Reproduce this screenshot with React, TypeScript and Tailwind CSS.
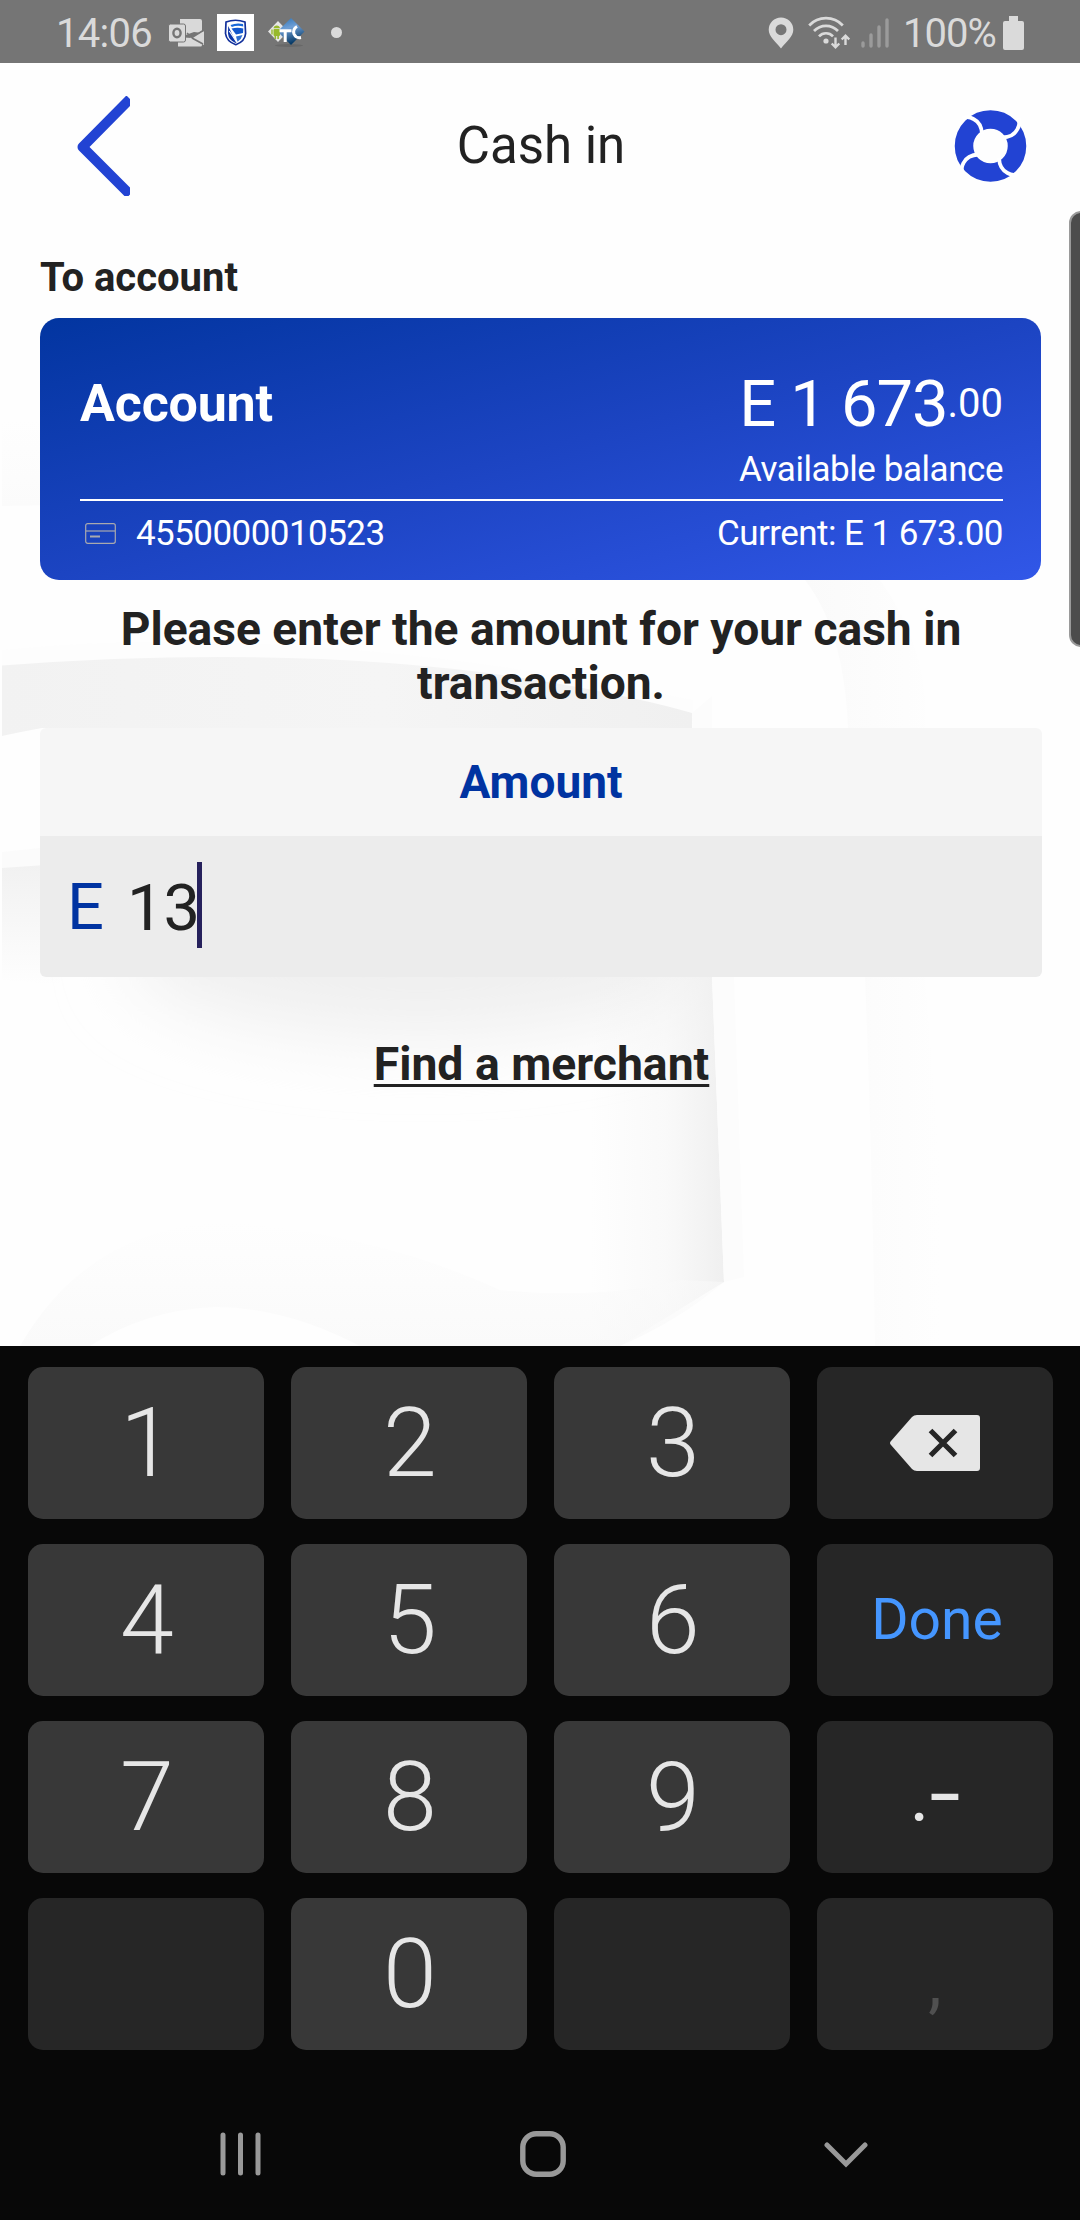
import React from "react";

function OutlookIcon() {
  return (
    <svg className="block h-[30px] w-[37px]" viewBox="0 0 37 30">
      <path d="M12 1h20q2 0 2 2v12l-8-1-14 5z" fill="#d9d9d9" />
      <path d="M10 19l13 1 11 6v1q0 1.500-1.500 1.500H10z" fill="#d9d9d9" />
      <path d="M36 13v14L22 20z" fill="#d9d9d9" />
      <path d="M19 15l5 4.500L36 12M24 20l11 6" stroke="#757575" strokeWidth="1.600" fill="none" />
      <rect x="0.500" y="6" width="17" height="18" rx="2" fill="#d9d9d9" stroke="#757575" strokeWidth="1" />
      <ellipse cx="9" cy="15" rx="3.600" ry="4.200" fill="none" stroke="#757575" strokeWidth="2.400" />
    </svg>
  );
}

function ShieldIcon() {
  return (
    <svg className="block h-[37px] w-[37px] bg-white" viewBox="0 0 37 37">
      <path d="M9 8q9.500-3.500 19 0l.6 11.500q-.6 8-9.800 11.200Q9.500 27.500 8.500 19.500z" fill="#fff" stroke="#12309b" strokeWidth="1.700" />
      <path d="M13.500 11q6-2.500 12.500-1l.3 2.500q-6-1.500-11.500.5z" fill="#1768d8" />
      <path d="M14.500 14.500q6-1.500 11.800 0l-.3 4.500-7 1.500z" fill="#1257cc" />
      <path d="M11.200 12l4.300 9 4 7.500-1 .5Q11.500 26 11 19.500z" fill="#0c35a8" />
      <path d="M25.500 21q-1.200 4.500-5 6.800L19 22.500z" fill="#2f6fd0" />
      <path d="M12.300 17l7.200 11" stroke="#fff" strokeWidth="1.100" fill="none" />
    </svg>
  );
}

function ConnectorIcon() {
  return (
    <svg className="block h-[32px] w-[38px]" viewBox="0 0 38 32">
      <defs>
        <linearGradient id="tc" x1="0" y1="0" x2="0.300" y2="1">
          <stop offset="0" stopColor="#2a6fb0" />
          <stop offset="0.450" stopColor="#6f9fd6" />
          <stop offset="1" stopColor="#073a66" />
        </linearGradient>
      </defs>
      <ellipse cx="22" cy="28.500" rx="14" ry="1.500" fill="#686868" />
      <path d="M11 4l10 10.500L11 25 1 14.500z" fill="#e6e6e6" />
      <path d="M24 1l13.500 13.500L24 28 10.500 14.500z" fill="url(#tc)" />
      <rect x="6.500" y="12" width="6.500" height="7" rx="1" fill="#97b92c" />
      <path d="M6.500 11.200a3.300 3.200 0 0 1 6.500 0zM4.300 12.500h1.400v5H4.300zM7.500 19h1.600v3H7.500zM10.300 19h1.600v3h-1.600z" fill="#97b92c" />
      <path d="M12.500 13.800h12M18.200 13v12M30 9.500q-4.500 2.500-3 7.500 2 4.500 7 3.500" stroke="#fff" strokeWidth="3" fill="none" />
    </svg>
  );
}

function PinIcon() {
  return (
    <svg className="block h-[32px] w-[26px]" viewBox="0 0 26 32">
      <path fillRule="evenodd" d="M13 .5a12.300 12.300 0 0 1 12.300 12.300C25.300 20 18 25 13 31.500 8 25 .7 20 .7 12.800A12.300 12.300 0 0 1 13 .5zm0 6.700a5.500 5.500 0 1 0 0 11 5.500 5.500 0 0 0 0-11z" fill="#dadada" />
    </svg>
  );
}

function WifiIcon() {
  return (
    <svg className="block h-[33px] w-[42px]" viewBox="0 0 42 33" fill="none" stroke="#dadada">
      <path d="M1.200 9.500a23 23 0 0 1 33.600 0M6 15a16.500 16.500 0 0 1 24 0M11 20.300a9.600 9.600 0 0 1 14 0" strokeWidth="2.700" />
      <circle cx="18" cy="25" r="2.600" fill="#dadada" stroke="none" />
      <path d="M27.500 21.500v9M23.700 27.500l3.800 3.800 3.800-3.800M37.500 29v-9M33.700 23.500l3.800-3.800 3.800 3.800" strokeWidth="2.400" />
    </svg>
  );
}

function SignalIcon() {
  return (
    <svg className="block h-[31px] w-[28px]" viewBox="0 0 28 31" stroke="#9b9b9b" strokeWidth="3.400" strokeLinecap="round">
      <path d="M2 29v-3M10 29V18M18 29V10M26 29V3" />
    </svg>
  );
}

function StatusBar() {
  return (
    <div className="flex h-[65px] shrink-0 items-center bg-[#757575] pl-[56px] pr-[56px] text-[40px] leading-none text-[#dadada]">
      <span className="w-[112px] pt-[2px] tracking-[-0.7px]">14:06</span>
      <OutlookIcon />
      <span className="ml-[12px]"><ShieldIcon /></span>
      <span className="ml-[13px]"><ConnectorIcon /></span>
      <span className="ml-[26px] size-[10.500px] rounded-full bg-[#dadada]" />
      <div className="ml-auto flex items-center">
        <PinIcon />
        <span className="ml-[14px]"><WifiIcon /></span>
        <span className="ml-[11px]"><SignalIcon /></span>
        <span className="ml-[14px] w-[96px] whitespace-nowrap pt-[2px] tracking-[-1px]">100%</span>
        <svg className="ml-[4px] block h-[34px] w-[21px]" viewBox="0 0 21 34">
          <path d="M6 0h9v5h4q2 0 2 2v25q0 2-2 2H2q-2 0-2-2V7q0-2 2-2h4z" fill="#dadada" />
        </svg>
      </div>
    </div>
  );
}

function Backdrop() {
  return (
    <svg className="absolute inset-x-0 bottom-0 h-[946px] w-[1080px]" viewBox="0 400 1080 946">
      <defs>
        <linearGradient id="band" x1="0" x2="1" y1="0" y2="0">
          <stop offset="0" stopColor="#f2f2f2" />
          <stop offset="0.550" stopColor="#f5f5f5" />
          <stop offset="1" stopColor="#f0f0f0" />
        </linearGradient>
        <linearGradient id="edge" x1="0" x2="1" y1="0" y2="0">
          <stop offset="0" stopColor="#f0f0f0" stopOpacity="0" />
          <stop offset="0.550" stopColor="#f1f1f1" stopOpacity="0.350" />
          <stop offset="1" stopColor="#efefef" />
        </linearGradient>
        <linearGradient id="stripe" x1="0" x2="1" y1="0" y2="0">
          <stop offset="0" stopColor="#fafafa" />
          <stop offset="0.900" stopColor="#fefefe" />
        </linearGradient>
        <linearGradient id="left" x1="0" x2="0" y1="0" y2="1">
          <stop offset="0" stopColor="#f1f1f1" />
          <stop offset="1" stopColor="#fefefe" />
        </linearGradient>
        <linearGradient id="top" x1="0" x2="0" y1="0" y2="1">
          <stop offset="0" stopColor="#fefefe" />
          <stop offset="1" stopColor="#fbfbfb" />
        </linearGradient>
        <linearGradient id="hill" x1="0" x2="0" y1="0" y2="1">
          <stop offset="0" stopColor="#fefefe" />
          <stop offset="1" stopColor="#f6f6f6" />
        </linearGradient>
        <filter id="soft" x="-30%" y="-80%" width="160%" height="260%">
          <feGaussianBlur stdDeviation="36" />
        </filter>
        <clipPath id="below">
          <path d="M2 868H708L712 977 724 1282 620 1346H2z" />
        </clipPath>
      </defs>
      <path d="M2 420H60V505L2 506z" fill="url(#top)" />
      <path d="M2 650Q300 620 693 700V728H2z" fill="#fdfdfd" />
      <path d="M2 665.500Q320 642 560 684 640 698 692 713V728H42Q20 732 2 736z" fill="url(#band)" />
      <path d="M692 713l20-17v32h-19z" fill="#fcfcfc" />
      <path d="M805 580H880Q930 650 925 728V977L955 1346H875Q872 1150 865 977L848 728Q844 630 805 580z" fill="url(#stripe)" />
      <path d="M2 852l38-4v22H2z" fill="#fbfbfb" />
      <path d="M2 868l58-4V985L2 980z" fill="url(#left)" />
      <g clipPath="url(#below)">
        <ellipse cx="420" cy="950" rx="290" ry="86" fill="#efefef" filter="url(#soft)" />
        <path d="M590 960H726V1346H590z" fill="url(#edge)" />
      </g>
      <path d="M712 977l22 0 10 300-20 5z" fill="#fcfcfc" />
      <path d="M20 1346Q90 1225 230 1222 380 1235 500 1290 600 1300 680 1280L724 1282Q680 1320 620 1346H360Q285 1307 215 1307 145 1310 90 1346z" fill="url(#hill)" opacity="0.500" />
    </svg>
  );
}

function Header() {
  return (
    <div className="flex h-[166px] items-center justify-between pl-[76px] pr-[53px]">
      <svg className="block h-[100px] w-[54px]" viewBox="0 0 54 100">
        <path d="M54 3L6.500 51 54 98.500" fill="none" stroke="#2243d3" strokeWidth="10" strokeLinejoin="round" />
      </svg>
      <h1 className="-ml-[1px] mb-[2px] text-[51px] leading-none text-[#222]">Cash in</h1>
      <svg className="mb-[1px] block h-[74px] w-[74px]" viewBox="-37.500 -37 74 74">
        <circle r="26.500" fill="none" stroke="#2243d3" strokeWidth="18.500" />
        {[0, 90, 180, 270].map((a) => (
          <path key={a} transform={`rotate(${a})`} d="M-28-28Q-22-30-17-27Q-9-23-8.500-12" fill="none" stroke="#fff" strokeWidth="3.800" />
        ))}
      </svg>
    </div>
  );
}

function AccountCard() {
  return (
    <section className="mx-[40px] mt-[16px] flex h-[262px] w-[1001px] flex-col rounded-[19px] bg-[linear-gradient(to_bottom_right,#0235a0_0%,#1c44c2_50%,#3157e8_100%)] pl-[40px] pr-[38px] pt-[50px] text-white">
      <div className="flex h-[72px] items-center justify-between">
        <span className="text-[52px] font-bold leading-none tracking-[-0.2px]">Account</span>
        <div className="flex items-center leading-none">
          <span className="text-[65px] tracking-[-1px]">E 1 673</span>
          <span className="text-[40px]">.00</span>
        </div>
      </div>
      <p className="mt-[9px] text-right text-[35px] leading-[42px] tracking-[-0.450px]">Available balance</p>
      <div className="mt-[8px] h-[2px] bg-white" />
      <div className="flex h-[64px] items-center text-[35px] leading-none tracking-[-0.550px]">
        <svg className="ml-[5px] block h-[21px] w-[31px]" viewBox="0 0 31 21" fill="none" stroke="#a9a9ae">
          <rect x="0.700" y="0.700" width="29.600" height="19.600" rx="2" strokeWidth="1.200" />
          <path d="M1 8h29" strokeWidth="1.200" />
          <path d="M5 13.500h10" strokeWidth="2" />
        </svg>
        <span className="ml-[20px]">4550000010523</span>
        <span className="ml-auto">Current: E 1 673.00</span>
      </div>
    </section>
  );
}

type KeyDef = { label?: string; kind: "digit" | "blank" | "erase" | "done" | "sign" | "comma" };

const keys: KeyDef[] = [
  { label: "1", kind: "digit" }, { label: "2", kind: "digit" }, { label: "3", kind: "digit" }, { kind: "erase" },
  { label: "4", kind: "digit" }, { label: "5", kind: "digit" }, { label: "6", kind: "digit" }, { kind: "done" },
  { label: "7", kind: "digit" }, { label: "8", kind: "digit" }, { label: "9", kind: "digit" }, { kind: "sign" },
  { kind: "blank" }, { label: "0", kind: "digit" }, { kind: "blank" }, { kind: "comma" },
];

function Key({ label, kind }: KeyDef) {
  const tone = kind === "digit" ? "bg-[#383838]" : "bg-[#262626]";
  return (
    <button className={`flex h-[152px] items-center justify-center rounded-[15px] leading-none text-[#e6e6e6] ${tone}`}>
      {kind === "digit" && <span className="ml-[2px] text-[97px] font-light">{label}</span>}
      {kind === "erase" && (
        <svg className="block h-[56px] w-[90px]" viewBox="0 0 90 56">
          <path d="M27 0H87q3 0 3 3v50q0 3-3 3H27q-3 0-5-2L1 30q-2-2 0-4L22 2q2-2 5-2z" fill="#e6e6e6" />
          <path d="M40.500 15.500l25 25m0-25l-25 25" stroke="#262626" strokeWidth="5.200" />
        </svg>
      )}
      {kind === "done" && <span className="mb-[2px] ml-[4px] text-[57px] text-[#4596ff]">Done</span>}
      {kind === "sign" && (
        <span className="flex items-baseline">
          <span className="-translate-y-[15px] text-[76px]">.</span>
          <span className="origin-[50%_65%] -translate-y-[8px] scale-y-75 text-[112px]">-</span>
        </span>
      )}
      {kind === "comma" && <span className="pt-[16px] text-[68px] text-[#505050]">,</span>}
    </button>
  );
}

function NavBar() {
  return (
    <div className="flex h-[90px] items-center justify-between pl-[220px] pr-[212px]">
      <svg className="block h-[44px] w-[41px]" viewBox="0 0 41 44" stroke="#999" strokeWidth="5" strokeLinecap="round">
        <path d="M3 3v38M20.500 3v38M38 3v38" />
      </svg>
      <svg className="ml-[1px] block h-[46px] w-[46px]" viewBox="0 0 46 46">
        <rect x="2.800" y="2.800" width="40.400" height="40.400" rx="13.500" fill="none" stroke="#999" strokeWidth="5.400" />
      </svg>
      <svg className="mt-[2px] block h-[28px] w-[44px]" viewBox="0 0 44 28">
        <path d="M3 4l19 19L41 4" fill="none" stroke="#999" strokeWidth="5" strokeLinecap="round" />
      </svg>
    </div>
  );
}

export default function App() {
  return (
    <div className="flex h-[2220px] w-[1080px] flex-col overflow-hidden bg-[#080808] font-['Roboto',sans-serif]">
      <StatusBar />
      <main className="relative h-[1283px] -mt-[2px] shrink-0 overflow-hidden bg-[#fefefe] text-[#222]">
        <Backdrop />
        <div className="relative">
          <Header />
          <h2 className="ml-[40px] pt-[25px] text-[40px] font-bold leading-[48px]">To account</h2>
          <AccountCard />
          <p className="ml-[91px] mt-[22px] w-[900px] text-center text-[46.150px] font-bold leading-[54px]">
            Please enter the amount for your cash in transaction.
          </p>
          <div className="mx-[40px] mt-[18px] w-[1002px] overflow-hidden rounded-[6px]">
            <div className="flex h-[108px] items-center justify-center bg-[#f6f6f6] text-[46px] font-bold leading-none text-[#0033a1]">Amount</div>
            <div className="flex h-[141px] items-center bg-[#ececec] pl-[27px] text-[65px] leading-none">
              <span className="w-[60px] pt-[2px] text-[#0033a1]">E</span>
              <span className="pt-[3px]">13</span>
              <span className="-ml-[3px] mb-[3px] h-[86px] w-[5px] bg-[#26215c]" />
            </div>
          </div>
          <div className="ml-[3px] mt-[60px] text-center text-[46.300px] font-bold leading-[54px]">
            <a className="underline decoration-[2.500px] underline-offset-[4px] [text-decoration-skip-ink:none]">Find a merchant</a>
          </div>
        </div>
        <div className="absolute -right-[4px] top-[148px] h-[436px] w-[15px] rounded-l-[12px] border-2 border-[#9a9a9a] bg-[#4c4c4c]" />
      </main>
      <div className="mt-[21px] grid grid-cols-4 gap-x-[27px] gap-y-[25px] pl-[28px] pr-[27px]">
        {keys.map((k, i) => (
          <Key key={i} {...k} />
        ))}
      </div>
      <div className="mt-[59px]">
        <NavBar />
      </div>
    </div>
  );
}
